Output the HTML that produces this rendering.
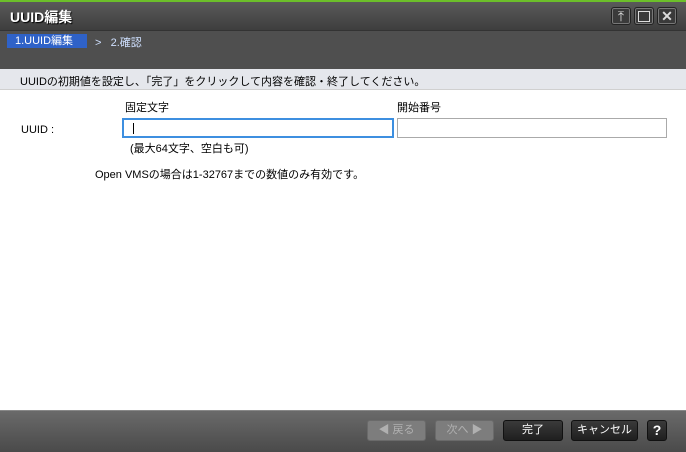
<!DOCTYPE html>
<html><head><meta charset="utf-8"><style>
body{margin:0;width:686px;height:451px;position:relative;overflow:hidden;font-family:"Liberation Sans","Noto Sans CJK JP",sans-serif;font-size:11px;background:#fff}
.a{position:absolute}
.tb{left:0;top:0;width:686px;height:30px;background:linear-gradient(#5a5a5a,#3e3e3e);border-top:2px solid #6cbf2a;box-sizing:border-box}
.wb{top:7px;width:20px;height:18px;border:1px solid #222;background:#3a3a3a;box-shadow:inset 0 0 0 1px #777;box-sizing:border-box;border-radius:3px;color:#ddd;text-align:center;line-height:16px;font-size:14px}
.btn{top:420px;height:21px;box-sizing:border-box;border-radius:3px;text-align:center;line-height:19px;font-size:11px}
.dis{background:#7d7d7d;color:#b0b0b0;border:1px solid #6a6a6a}
.en{background:linear-gradient(#3a3a3a,#1f1f1f);color:#fff;border:1px solid #111}
</style></head><body>
<div class="a tb"></div>
<div class="a" style="left:10px;top:7px;color:#fff;font-weight:bold;font-size:14px;text-shadow:1px 1px 1px #000">UUID編集</div>
<div class="a wb" style="left:611px">⤒</div>
<div class="a wb" style="left:634px"><div style="margin:3px 3px;height:9px;border:1px solid #ddd"></div></div>
<div class="a wb" style="left:657px;font-weight:bold">✕</div>
<div class="a" style="left:0;top:30px;width:686px;height:39px;background:#4f4f4f;border-top:1px solid #333"></div>
<div class="a" style="left:7px;top:34px;width:80px;height:14px;background:#2f62c8;color:#fff;font-size:11px;line-height:14px;padding-left:8px;box-sizing:border-box">1.UUID編集</div>
<div class="a" style="left:95px;top:34px;color:#cfe0ff;font-size:11px">&gt;&nbsp;&nbsp;&nbsp;2.確認</div>
<div class="a" style="left:0;top:69px;width:686px;height:20px;background:#e5e7ec;border-bottom:1px solid #d0d0d0"></div>
<div class="a" style="left:20px;top:73px;color:#000">UUIDの初期値を設定し、「完了」をクリックして内容を確認・終了してください。</div>
<div class="a" style="left:125px;top:99px">固定文字</div>
<div class="a" style="left:397px;top:99px">開始番号</div>
<div class="a" style="left:21px;top:124px">UUID :</div>
<div class="a" style="left:122px;top:118px;width:272px;height:20px;border:2px solid #3d8fe0;box-sizing:border-box;background:#fff"><div style="position:absolute;left:9px;top:3px;width:1px;height:11px;background:#000"></div></div>
<div class="a" style="left:397px;top:118px;width:270px;height:20px;border:1px solid #aaa;box-sizing:border-box"></div>
<div class="a" style="left:130px;top:140px">(最大64文字、空白も可)</div>
<div class="a" style="left:95px;top:166px">Open VMSの場合は1-32767までの数値のみ有効です。</div>
<div class="a" style="left:0;top:410px;width:686px;height:41px;background:linear-gradient(#6a6a6a,#4a4a4a);border-top:1px solid #888"></div>
<div class="a btn dis" style="left:367px;width:59px">◀ 戻る</div>
<div class="a btn dis" style="left:435px;width:59px">次へ ▶</div>
<div class="a btn en" style="left:503px;width:60px">完了</div>
<div class="a btn en" style="left:571px;width:67px">キャンセル</div>
<div class="a btn en" style="left:647px;width:20px;font-weight:bold;font-size:14px">?</div>
</body></html>
